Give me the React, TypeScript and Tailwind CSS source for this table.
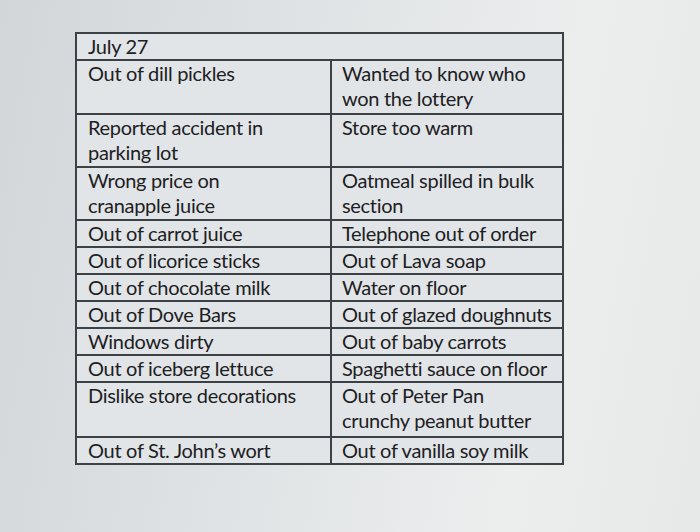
import React from "react";

type Row = { left: string[]; right: string[]; h: number };

const rows: Row[] = [
  { left: ["Out of dill pickles"], right: ["Wanted to know who", "won the lottery"], h: 54 },
  { left: ["Reported accident in", "parking lot"], right: ["Store too warm"], h: 53 },
  { left: ["Wrong price on", "cranapple juice"], right: ["Oatmeal spilled in bulk", "section"], h: 53 },
  { left: ["Out of carrot juice"], right: ["Telephone out of order"], h: 25 },
  { left: ["Out of licorice sticks"], right: ["Out of Lava soap"], h: 25 },
  { left: ["Out of chocolate milk"], right: ["Water on floor"], h: 25 },
  { left: ["Out of Dove Bars"], right: ["Out of glazed doughnuts"], h: 25 },
  { left: ["Windows dirty"], right: ["Out of baby carrots"], h: 25 },
  { left: ["Out of iceberg lettuce"], right: ["Spaghetti sauce on floor"], h: 25 },
  { left: ["Dislike store decorations"], right: ["Out of Peter Pan", "crunchy peanut butter"], h: 55 },
  { left: ["Out of St. John\u2019s wort"], right: ["Out of vanilla soy milk"], h: 26 },
];

function Lines({ lines }: { lines: string[] }) {
  return (
    <>
      {lines.map((l, i) => (
        <span key={i} className="block whitespace-nowrap">
          {l}
        </span>
      ))}
    </>
  );
}

export default function App() {
  return (
    <div className="w-[700px] h-[532px] overflow-hidden bg-[linear-gradient(100deg,#d2d6d9_0%,#e0e3e5_40%,#eceeee_75%,#e7e9e9_100%)] font-['Lato','Liberation_Sans',sans-serif] text-[#1c2023] [font-variant-ligatures:none]">
      <div className="pt-[32px] pl-[75px]">
        <table className="border-collapse border-2 border-[#3c4146] bg-[#e2e5e7] text-[20px] leading-[25px] tracking-[-0.3px]">
          <tbody>
            <tr className="h-[26px]">
              <td colSpan={2} className="border-2 border-[#3c4146] px-[11px] align-top">
                July 27
              </td>
            </tr>
            {rows.map((r, i) => (
              <tr key={i} style={{ height: r.h }}>
                <td className="w-[255px] border-2 border-[#3c4146] pl-[11px] pr-1 align-top">
                  <Lines lines={r.left} />
                </td>
                <td className="w-[232px] border-2 border-[#3c4146] pl-[10px] pr-1 align-top">
                  <Lines lines={r.right} />
                </td>
              </tr>
            ))}
          </tbody>
        </table>
      </div>
    </div>
  );
}
